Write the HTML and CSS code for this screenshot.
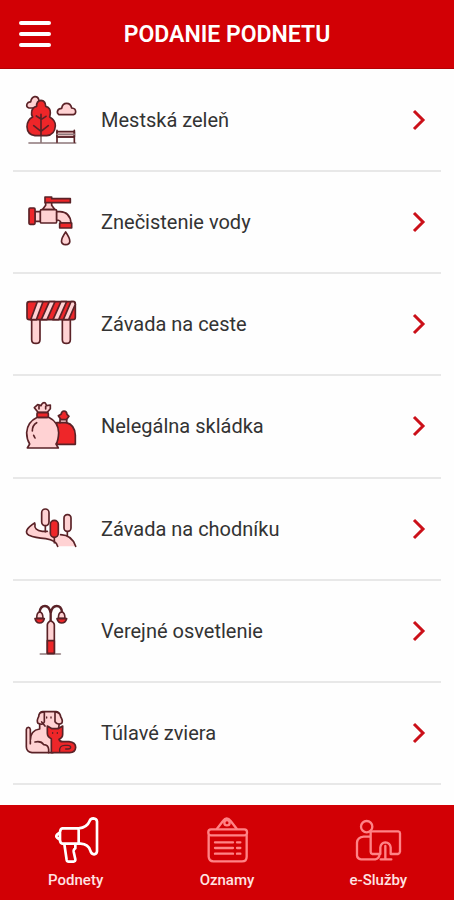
FILE: index.html
```html
<!DOCTYPE html>
<html lang="sk">
<head>
<meta charset="utf-8">
<meta name="viewport" content="width=device-width, initial-scale=1">
<title>Podanie podnetu</title>
<link rel="stylesheet" href="styles.css">
</head>
<body>
<header class="topbar">
  <button class="menu" type="button" aria-label="Menu">
    <svg viewBox="0 0 34 30" aria-hidden="true"><path d="M3 4H31M3 15H31M3 26H31"/></svg>
  </button>
  <h1 class="title">PODANIE PODNETU</h1>
</header>

<main class="content">
  <ul class="list">
    <li class="item"><a class="link" href="#zelen">
      <svg class="icon" viewBox="0 0 225 210" aria-hidden="true">
        <path class="pink" d="M42 69q-9-3-6-12 3-7 11-6 2-14 12-16 9-1 12 8l6 26z"/>
        <path class="soft" d="M42 174H182M78 150v24"/>
        <path class="red" d="M65 64q-1-17 13-18 14 1 14 18 15 4 14 20-1 8-2 12 18 10 17 27-2 27-26 29H60q-23-3-24-27 0-20 17-29-5-7-3-16 2-13 15-16z"/>
        <path d="M78 150V88M78 102l-14-9M78 104l15-10M78 139l-22-17M78 139l22-17"/>
        <path class="pink" d="M132 89q-7-4-4-12 3-7 12-7 2-15 15-15 12 0 15 14 12 1 12 11 0 7-7 9z"/>
        <path class="pink" d="M126 140h52v16h-52z"/>
        <path d="M126 136v36M178 136v36M126 156h52"/>
        <path class="soft" d="M126 148h52"/>
      </svg>
      <span class="label">Mestská zeleň</span>
      <svg class="chevron" viewBox="0 0 14 22" aria-hidden="true"><path d="M2 2l9 9-9 9"/></svg>
    </a></li>
    <li class="item"><a class="link" href="#voda">
      <svg class="icon" viewBox="0 0 225 210" aria-hidden="true">
        <path class="pink" d="M60 74h17v29H60z"/>
        <path class="pink" d="M92 44h18v11l10 13H82l10-13z"/>
        <rect class="pink" x="76" y="68" width="49" height="40" rx="4"/>
        <path class="pink" d="M125 74h10q30 1 33 34h-30q-2-9-13-9z"/>
        <rect class="red" x="42" y="63" width="18" height="49" rx="3"/>
        <path class="red" d="M90 30h20v5h56v12H90z"/>
        <path class="red" d="M134 108h36v15h-36z"/>
        <path class="pink" d="M152 135q-25 36 0 38 25-2 0-38z"/>
      </svg>
      <span class="label">Znečistenie vody</span>
      <svg class="chevron" viewBox="0 0 14 22" aria-hidden="true"><path d="M2 2l9 9-9 9"/></svg>
    </a></li>
    <li class="item"><a class="link" href="#cesta">
      <svg class="icon" viewBox="0 0 225 210" aria-hidden="true">
        <path class="pink" d="M50 90h25v62q0 11-12 11-13 0-13-11zM142 90h24v62q0 11-12 11t-12-11z"/>
        <rect class="red" x="36" y="38" width="145" height="54" rx="7"/>
        <path class="pink" d="M67 38h17L64 92H47zM103 38h17l-24 54H79zM138 38h17l-24 54h-17zM168 38h10l3 8-20 46h-16z"/>
      </svg>
      <span class="label">Závada na ceste</span>
      <svg class="chevron" viewBox="0 0 14 22" aria-hidden="true"><path d="M2 2l9 9-9 9"/></svg>
    </a></li>
    <li class="item"><a class="link" href="#skladka">
      <svg class="icon" viewBox="0 0 225 210" aria-hidden="true">
        <path class="red" d="M138 86l-8-12 8-4q2-10 9-10 8 0 9 10l6 6-8 10v9q25 6 27 37v28h-56V95h11z"/>
        <path class="pink" d="M135 86h20v9h-20z"/>
        <path class="pink" d="M69 64l-11-14 10-9 10 3q5-12 13-8l4 8 11-2v11l-9 11z"/>
        <path d="M72 46v8M92 46v8"/>
        <path class="pink" d="M67 79h34q29 14 30 46-1 24-8 34l7 12H37l7-12q-9-15-9-34 2-32 32-46z"/>
        <rect class="red" x="66" y="65" width="34" height="14" rx="3"/>
        <path d="M65 95q-13 7-13 25M56 133l4 8"/>
      </svg>
      <span class="label">Nelegálna skládka</span>
      <svg class="chevron" viewBox="0 0 14 22" aria-hidden="true"><path d="M2 2l9 9-9 9"/></svg>
    </a></li>
    <li class="item"><a class="link" href="#chodnik">
      <svg class="icon" viewBox="0 0 225 210" aria-hidden="true">
        <path class="fill" d="M59 87q-38 24-17 37 18 8 50 10 32 5 36 23h53q-12-32-42-35-23-9-55-10-28-5-25-25z"/>
        <path d="M59 87q-38 24-17 37 18 8 50 10 32 5 36 23M60 90q-4 19 22 22h15M137 122q34 1 45 35"/>
        <path d="M91 92v21M118 129v17M157 110v15"/>
        <rect class="pink" x="80" y="45" width="22" height="50" rx="11"/>
        <rect class="red" x="106" y="79" width="24" height="51" rx="12"/>
        <rect class="pink" x="147" y="62" width="21" height="50" rx="10"/>
      </svg>
      <span class="label">Závada na chodníku</span>
      <svg class="chevron" viewBox="0 0 14 22" aria-hidden="true"><path d="M2 2l9 9-9 9"/></svg>
    </a></li>
    <li class="item"><a class="link" href="#osvetlenie">
      <svg class="icon" viewBox="0 0 225 210" aria-hidden="true">
        <path class="soft" d="M76 174h60"/>
        <path class="thick" d="M107 76V52Q103 30 90 30 76 30 74 48M107 52q4-22 18-22 14 0 16 18"/>
        <path class="pink" d="M97 86q0-7 10-12 11 5 11 12v86H97z"/>
        <path class="red" d="M97 134h21v38H97z"/>
        <path class="pink" d="M65 67q0-18 9-19 10 1 10 19zM130 67q0-18 10-19 10 1 10 19z"/>
        <path class="red" d="M60 68h28q-3 13-14 13T60 68zM126 68h29q-4 13-15 13-10 0-14-13z"/>
      </svg>
      <span class="label">Verejné osvetlenie</span>
      <svg class="chevron" viewBox="0 0 14 22" aria-hidden="true"><path d="M2 2l9 9-9 9"/></svg>
    </a></li>
    <li class="item"><a class="link" href="#zviera">
      <svg class="icon" viewBox="0 0 225 210" aria-hidden="true">
        <path class="pink" d="M74 80V48q2-7 9-7h40q8 1 9 8v35l-18 80H51q-17-3-17-18V94q1-6 6-6 5 0 6 6v33q0-30 28-34z"/>
        <path class="pink" d="M80 43q-8 1-9 13-7 12-2 20 14 7 19-4V42zM127 43q9 2 10 13 8 12 3 20-12 7-20-5V42z"/>
        <path d="M46 130v7M60 132q19-4 26 8 14 1 15 14v10M80 72l10 12"/>
        <path class="dot" d="M95 57v3M108 57v3"/>
        <path class="red" d="M97 84l14 8h18l14-8v25q0 11-11 15 3 8 13 7h17q20 2 20 17-1 15-18 16h-55v-42q-12-5-12-16z"/>
        <path class="dot" d="M134 160q-2-18 16-18h8q9 0 9 6 0 5-8 5h-7"/>
        <path class="dot" d="M113 104v2M127 104v2"/>
      </svg>
      <span class="label">Túlavé zviera</span>
      <svg class="chevron" viewBox="0 0 14 22" aria-hidden="true"><path d="M2 2l9 9-9 9"/></svg>
    </a></li>
  </ul>
</main>

<nav class="tabs" aria-label="Hlavná navigácia">
  <a class="tab active" href="#podnety" aria-current="page">
    <svg class="tab-icon" viewBox="0 0 144 144" aria-hidden="true">
      <path d="M31 37H80Q105 35 113 15 115 7 124 7 134 8 135 16V106Q134 114 126 115 118 115 115 104 109 84 86 83H31Q24 81 24 71V49Q25 38 31 37zM80 37V83M24 49l-9 7q-4 5 0 9l9 7M37 84l7 48q1 5 6 5h14q7-1 6-7l-5-23q-1-7 5-10V84"/>
    </svg>
    <span>Podnety</span>
  </a>
  <a class="tab" href="#oznamy">
    <svg class="tab-icon" viewBox="0 0 144 144" aria-hidden="true">
      <path d="M42 38L60 15Q71-1 83 15L101 38"/>
      <circle cx="72" cy="20" r="8"/>
      <rect x="16" y="40" width="116" height="18" rx="8"/>
      <path d="M17 59V122q1 14 14 14H117q14 0 14-14V59M36 79H90M36 96H90M36 113H90M102 79h10M102 96h10M102 113h10"/>
    </svg>
    <span>Oznamy</span>
  </a>
  <a class="tab" href="#sluzby">
    <svg class="tab-icon" viewBox="0 0 144 144" aria-hidden="true">
      <circle cx="38" cy="32" r="17"/>
      <path d="M50 46H133q5 1 5 6V107q-1 6-6 7H110V94Q108 80 94 79 81 80 79 94V114H55q-5-1-5-6zM50 62H29Q10 64 9 80V119q1 10 12 11H64Q75 128 77 115M94 90v40M80 130h32"/>
    </svg>
    <span>e-Služby</span>
  </a>
</nav>
</body>
</html>
```
FILE: styles.css
```css
* {
  box-sizing: border-box;
}

body {
  margin: 0;
  min-height: 100vh;
  display: flex;
  flex-direction: column;
  background: #fefefe;
  color: #333;
  font-family: Roboto, "Liberation Sans", sans-serif;
}

.topbar {
  display: grid;
  grid-template-columns: 54px 1fr 54px;
  align-items: center;
  height: 69px;
  background: #d20005;
  border-bottom: 1px solid #b50004;
  color: #fff;
}

.menu {
  justify-self: end;
  width: 36px;
  height: 30px;
  padding: 0;
  border: 0;
  background: none;
}

.menu svg {
  display: block;
  width: 34px;
  height: 30px;
  fill: none;
  stroke: #fff;
  stroke-width: 4;
  stroke-linecap: round;
}

.title {
  margin: 0;
  padding-top: 1px;
  text-align: center;
  font-size: 23px;
  line-height: 30px;
  font-weight: 600;
}

.content {
  flex: 1;
  display: flex;
  padding: 1px 13px 20px;
}

.list {
  flex: 1;
  display: flex;
  flex-direction: column;
  margin: 0;
  padding: 0;
  list-style: none;
}

.item {
  flex: 1;
  display: flex;
  border-bottom: 2px solid #e8e8e8;
}

.link {
  flex: 1;
  display: flex;
  align-items: center;
  gap: 11px;
  padding: 0 15px 0 2px;
  color: inherit;
  text-decoration: none;
}

.icon {
  width: 75px;
  height: 70px;
  fill: none;
  stroke: #5a2227;
  stroke-width: 5;
  stroke-linecap: round;
  stroke-linejoin: round;
}

.pink {
  fill: #ffd2d3;
}

.red {
  fill: #ee2629;
}

.fill {
  fill: #ffd2d3;
  stroke: none;
}

.soft {
  stroke: #8d7779;
}

.thick {
  stroke-width: 7;
}

.dot {
  stroke-width: 4;
}

.label {
  flex: 1;
  font-size: 20px;
  line-height: 28px;
}

.chevron {
  width: 14px;
  height: 22px;
  fill: none;
  stroke: #cb1019;
  stroke-width: 3;
}

.tabs {
  display: grid;
  grid-template-columns: repeat(3, 1fr);
  height: 95px;
  padding-top: 11px;
  background: #d20005;
}

.tab {
  display: flex;
  flex-direction: column;
  align-items: center;
  gap: 6px;
  color: #ffe3e3;
  font-size: 15px;
  line-height: 20px;
  font-weight: 500;
  text-decoration: none;
}

.tab-icon {
  width: 48px;
  height: 48px;
  fill: none;
  stroke: #ff8386;
  stroke-width: 7;
  stroke-linecap: round;
  stroke-linejoin: round;
}

.active .tab-icon {
  stroke: #fff;
  stroke-width: 8;
}
```
